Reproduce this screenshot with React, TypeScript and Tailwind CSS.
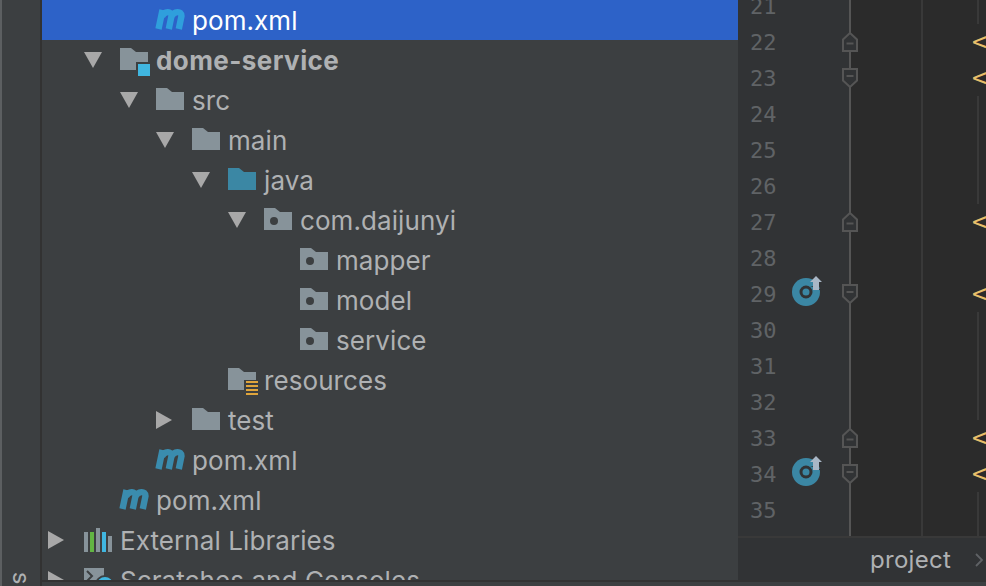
type Kind = "folder" | "java" | "pkg" | "res" | "module" | "maven" | "libs" | "scratch";

type TreeRow = {
  label: string;
  indent: number;
  icon: Kind;
  arrow?: "down" | "right";
  selected?: boolean;
  bold?: boolean;
};

const rows: TreeRow[] = [
  { label: "pom.xml", indent: 78, icon: "maven", selected: true },
  { label: "dome-service", indent: 42, icon: "module", arrow: "down", bold: true },
  { label: "src", indent: 78, icon: "folder", arrow: "down" },
  { label: "main", indent: 114, icon: "folder", arrow: "down" },
  { label: "java", indent: 150, icon: "java", arrow: "down" },
  { label: "com.daijunyi", indent: 186, icon: "pkg", arrow: "down" },
  { label: "mapper", indent: 222, icon: "pkg" },
  { label: "model", indent: 222, icon: "pkg" },
  { label: "service", indent: 222, icon: "pkg" },
  { label: "resources", indent: 150, icon: "res" },
  { label: "test", indent: 114, icon: "folder", arrow: "right" },
  { label: "pom.xml", indent: 78, icon: "maven" },
  { label: "pom.xml", indent: 42, icon: "maven" },
  { label: "External Libraries", indent: 6, icon: "libs", arrow: "right" },
  { label: "Scratches and Consoles", indent: 6, icon: "scratch", arrow: "right" },
];

type Line = {
  n: number;
  fold?: "open" | "close";
  run?: boolean;
  tag?: boolean;
  guide?: boolean;
};

const lines: Line[] = [
  { n: 21, guide: true },
  { n: 22, fold: "close", tag: true },
  { n: 23, fold: "open", tag: true },
  { n: 24, guide: true },
  { n: 25, guide: true },
  { n: 26, guide: true },
  { n: 27, fold: "close", tag: true },
  { n: 28 },
  { n: 29, fold: "open", run: true, tag: true },
  { n: 30, guide: true },
  { n: 31, guide: true },
  { n: 32, guide: true },
  { n: 33, fold: "close", tag: true },
  { n: 34, fold: "open", run: true, tag: true },
  { n: 35, guide: true },
];

const folderPath = "M0 0h11l5 4h12v18H0z";

const Arrow = ({ dir }: { dir: "down" | "right" }) => (
  <svg width="18" height="18" viewBox="0 0 18 18">
    {dir === "down" ? <path d="M0 1h18L9 17z" fill="#a8a8a8" /> : <path d="M0 0l16 9L0 18z" fill="#a8a8a8" />}
  </svg>
);

const TreeIcon = ({ kind, selected }: { kind: Kind; selected?: boolean }) => {
  if (kind === "maven") {
    const c = selected ? "#2f9fdc" : "#3a8cae";
    return (
      <svg width="32" height="22" viewBox="0 0 32 22" className="-ml-0.5 -mt-0.5">
        <path
          d="M4.5 21L8.5 2M8 8.5C10.5 3 17.5 2.5 17.5 8L14.8 21M17.5 8.5C20 3 27.5 2.5 27.5 8L24.8 21"
          fill="none"
          stroke={c}
          strokeWidth="6.4"
        />
      </svg>
    );
  }
  if (kind === "libs") {
    return (
      <svg width="28" height="24" viewBox="0 0 28 24">
        <rect x="0" y="4" width="4" height="20" fill="#87939a" />
        <rect x="6" y="4" width="4" height="20" fill="#62b543" />
        <rect x="12" y="0" width="4" height="24" fill="#87939a" />
        <rect x="18" y="4" width="4" height="20" fill="#40b6e0" />
        <rect x="24" y="8" width="4" height="16" fill="#87939a" />
      </svg>
    );
  }
  if (kind === "scratch") {
    return (
      <svg width="30" height="24" viewBox="0 0 30 24" className="overflow-visible">
        <rect x="0" y="0" width="20" height="14" fill="#87939a" />
        <path d="M3 3l5 5-5 5" fill="none" stroke="#3c3f41" strokeWidth="2" />
        <circle cx="21" cy="17" r="9" fill="#40b6e0" stroke="#3c3f41" strokeWidth="2" />
      </svg>
    );
  }
  return (
    <svg width="30" height="24" viewBox="0 0 30 24" className="overflow-visible">
      <path d={folderPath} fill={kind === "java" ? "#3b87a4" : "#87939a"} />
      {kind === "pkg" && <circle cx="10" cy="13" r="4" fill="#3c3f41" />}
      {kind === "module" && (
        <>
          <rect x="16" y="14" width="14" height="14" fill="#3c3f41" />
          <rect x="18" y="16" width="12" height="12" fill="#40b6e0" />
        </>
      )}
      {kind === "res" && (
        <>
          <rect x="16" y="12" width="16" height="17" fill="#3c3f41" />
          <path d="M18 14h12M18 18h12M18 22h12M18 26h12" stroke="#e0a53c" strokeWidth="2" />
        </>
      )}
    </svg>
  );
};

const FoldMark = ({ type }: { type: "open" | "close" }) => (
  <svg width="16" height="20" viewBox="0 0 16 20" className="absolute left-[104px] top-1/2 -translate-y-1/2">
    {type === "close" ? (
      <path d="M1 19V7.5L8 1l7 6.5V19z" fill="#313335" stroke="#555555" strokeWidth="2" />
    ) : (
      <path d="M1 1v11.5L8 19l7-6.5V1z" fill="#313335" stroke="#555555" strokeWidth="2" />
    )}
    <path d={type === "close" ? "M4.5 11.5h7" : "M4.5 8h7"} stroke="#555555" strokeWidth="2" />
  </svg>
);

const RunMark = () => (
  <svg width="32" height="32" viewBox="0 0 32 32" className="absolute left-[54px] top-1/2 -translate-y-5">
    <circle cx="14" cy="18" r="14" fill="#3b87a4" />
    <circle cx="14" cy="18" r="5" fill="none" stroke="#313335" strokeWidth="3" />
    <path d="M18 12h3V4h6v12h4z" fill="#313335" />
    <path d="M24 2l6 6h-3v8h-6V8h-3z" fill="#a9b7c6" />
  </svg>
);

const LineRow = ({ line, extra }: { line?: Line; extra?: boolean }) => (
  <div className={extra ? "flex h-2 relative" : "flex h-9 relative"}>
    <div className="w-[113px] shrink-0 bg-[#313335] border-r-2 border-[#555555] pl-3 flex items-center text-[22px] text-[#606366] font-['DejaVu_Sans_Mono',monospace]">
      {line?.n}
    </div>
    {line?.run && <RunMark />}
    {line?.fold && <FoldMark type={line.fold} />}
    <div className="w-[72px] shrink-0 border-r-2 border-[#393939]" />
    <div className="relative flex-1 flex items-center">
      {line?.tag ? (
        <span className="ml-[49px] text-[25px] text-[#e8bf6a] font-['DejaVu_Sans_Mono',monospace]">&lt;</span>
      ) : (
        (line?.guide || extra) && <div className="ml-[54px] w-0.5 h-full bg-[#393939]" />
      )}
    </div>
  </div>
);

export default function App() {
  return (
    <div className="w-[986px] h-[586px] flex overflow-hidden bg-[#3c3f41] font-['Inter',sans-serif]">
      <div className="w-[42px] shrink-0 relative bg-[#3c3f41] border-l-2 border-r-2 border-l-[#5c5f61] border-r-[#323232]">
        <span className="absolute left-[13px] top-[566px] rotate-90 text-[24px] leading-none text-[#afb1b3]">s</span>
      </div>
      <div className="flex-1 min-w-0 flex flex-col">
        <div className="h-[580px] flex overflow-hidden">
          <div className="w-[696px] shrink-0 overflow-hidden">
            {rows.map((r, i) => (
              <div
                key={i}
                className={
                  r.selected
                    ? "h-10 flex items-center bg-[#2d62c8] text-white"
                    : "h-10 flex items-center text-[#afb1b3]"
                }
                style={{ paddingLeft: r.indent }}
              >
                <div className="w-9 shrink-0 flex items-center">{r.arrow && <Arrow dir={r.arrow} />}</div>
                <div className="w-9 shrink-0 flex items-center">
                  <TreeIcon kind={r.icon} selected={r.selected} />
                </div>
                <span className={r.bold ? "text-[26px] font-bold tracking-[0.42px] whitespace-nowrap" : "text-[26px] tracking-[0.08px] whitespace-nowrap"}>
                  {r.label}
                </span>
              </div>
            ))}
          </div>
          <div className="flex-1 min-w-0 flex flex-col bg-[#2b2b2b]">
            <div className="h-[536px] overflow-hidden">
              <div className="-mt-3">
                {lines.map((l) => (
                  <LineRow key={l.n} line={l} />
                ))}
                <LineRow extra />
              </div>
            </div>
            <div className="flex-1 flex items-center bg-[#313335] border-t-2 border-[#393939] pl-[132px] pt-0.5">
              <span className="text-[24px] tracking-[0.3px] text-[#afb1b3]">project</span>
              <svg width="10" height="16" viewBox="0 0 10 16" className="ml-[23px]">
                <path d="M2 2l6 6-6 6" fill="none" stroke="#5f6265" strokeWidth="1.8" />
              </svg>
            </div>
          </div>
        </div>
        <div className="flex-1 border-t-2 border-[#323232]" />
      </div>
    </div>
  );
}
